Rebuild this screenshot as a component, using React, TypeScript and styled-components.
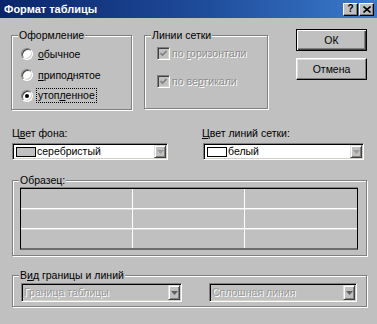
import React from 'react';
import styled, { createGlobalStyle } from 'styled-components';

const Global = createGlobalStyle`
  html, body { margin: 0; padding: 0; background: #c0c0c0; }
  body { font-family: "Liberation Sans", Arial, sans-serif; font-size: 10.5px; color: #000; }
  #root { width: 377px; height: 324px; }
`;

const Window = styled.div`
  width: 377px;
  height: 324px;
  background: #c0c0c0;
  display: flex;
  flex-direction: column;
  overflow: hidden;
`;

const TitleBar = styled.div`
  flex: 0 0 18px;
  height: 18px;
  box-sizing: border-box;
  background: linear-gradient(90deg, #0a246a 0%, #1f4d9c 55%, #3b7acb 100%);
  display: flex;
  align-items: center;
  padding: 0 3px 0 4px;
`;

const Title = styled.div`
  flex: 1;
  color: #fff;
  font-weight: bold;
  font-size: 11px;
  letter-spacing: 0;
`;

const TitleButtons = styled.div`
  display: flex;
  gap: 1px;
`;

const TitleButton = styled.div`
  width: 15px;
  height: 13px;
  box-sizing: border-box;
  background: #c0c0c0;
  border: 1px solid;
  border-color: #fff #000 #000 #fff;
  box-shadow: inset -1px -1px #808080;
  display: flex;
  align-items: center;
  justify-content: center;
  font-weight: bold;
  font-size: 10px;
  line-height: 1;
`;

const Body = styled.div`
  display: flex;
  flex-direction: column;
  padding: 11px 10px 0 11px;
`;

const TopRow = styled.div`
  display: flex;
  align-items: flex-start;
`;

const GroupBox = styled.div<{ $w: number; $h: number; $mt?: number; $ml?: number }>`
  position: relative;
  box-sizing: border-box;
  width: ${p => p.$w}px;
  height: ${p => p.$h}px;
  margin-top: ${p => p.$mt ?? 0}px;
  margin-left: ${p => p.$ml ?? 0}px;
  border: 1px solid #808080;
  box-shadow: 1px 1px 0 #fff, inset 1px 1px 0 #fff;
`;

const Legend = styled.span`
  position: absolute;
  top: -7px;
  left: 6px;
  padding: 0 1px;
  background: #c0c0c0;
  line-height: 13px;
  white-space: nowrap;
`;

const RadioList = styled.div`
  display: flex;
  flex-direction: column;
  padding: 7px 0 0 9px;
`;

const OptionRow = styled.div<{ $h: number }>`
  display: flex;
  align-items: center;
  height: ${p => p.$h}px;
  white-space: nowrap;
`;

const RadioCircle = styled.div<{ $checked?: boolean }>`
  width: 12px;
  height: 12px;
  box-sizing: border-box;
  border-radius: 50%;
  background: #fff;
  border: 1px solid;
  border-color: #808080 #fff #fff #808080;
  box-shadow: inset 1px 1px 0 #404040, inset -1px -1px 0 #d4d0c8;
  margin-right: 5px;
  display: flex;
  align-items: center;
  justify-content: center;
  &::after {
    content: '';
    display: ${p => (p.$checked ? 'block' : 'none')};
    width: 4px;
    height: 4px;
    border-radius: 50%;
    background: #000;
  }
`;

const FocusText = styled.span`
  outline: 1px dotted #000;
  outline-offset: 0;
  padding: 0 1px;
  margin-left: -1px;
  line-height: 13px;
`;

const CheckList = styled.div`
  display: flex;
  flex-direction: column;
  gap: 8px;
  padding: 7px 0 0 12px;
`;

const CheckBox = styled.div`
  width: 13px;
  height: 13px;
  box-sizing: border-box;
  background: #c0c0c0;
  border: 1px solid;
  border-color: #808080 #fff #fff #808080;
  box-shadow: inset 1px 1px 0 #404040, inset -1px -1px 0 #d4d0c8;
  margin-right: 2px;
  display: flex;
  align-items: center;
  justify-content: center;
`;

const DisabledText = styled.span`
  color: #8c8c8c;
  text-shadow: 1px 1px 0 #fff;
`;

const ButtonColumn = styled.div`
  display: flex;
  flex-direction: column;
  gap: 7px;
  margin-left: auto;
`;

const PushButton = styled.div<{ $default?: boolean }>`
  width: 71px;
  height: 22px;
  box-sizing: border-box;
  background: #c0c0c0;
  display: flex;
  align-items: center;
  justify-content: center;
  border: 1px solid;
  border-color: ${p => (p.$default ? '#000' : '#fff #000 #000 #fff')};
  box-shadow: ${p =>
    p.$default
      ? 'inset 1px 1px 0 #fff, inset -1px -1px 0 #404040, inset -2px -2px 0 #808080'
      : 'inset -1px -1px 0 #808080, inset 1px 1px 0 #dfdfdf'};
`;

const ColorRow = styled.div`
  display: grid;
  grid-template-columns: 156px 161px;
  column-gap: 35px;
  margin-top: 17px;
  padding-left: 1px;
`;

const Field = styled.div`
  display: flex;
  flex-direction: column;
  gap: 3px;
`;

const FieldLabel = styled.div<{ $shift?: number }>`
  line-height: 13px;
  margin-left: ${p => p.$shift ?? 0}px;
  white-space: nowrap;
`;

const Combo = styled.div<{ $h: number; $w?: number; $disabled?: boolean }>`
  display: flex;
  align-items: center;
  box-sizing: border-box;
  height: ${p => p.$h}px;
  width: ${p => (p.$w ? `${p.$w}px` : 'auto')};
  background: ${p => (p.$disabled ? '#c0c0c0' : '#fff')};
  border: 1px solid;
  border-color: #808080 #fff #fff #808080;
  box-shadow: inset 1px 1px 0 #000, inset -1px -1px 0 #d4d0c8;
  padding: 1px 1px 1px 2px;
`;

const Swatch = styled.div<{ $color: string }>`
  width: 20px;
  height: 10px;
  box-sizing: border-box;
  border: 1px solid #000;
  background: ${p => p.$color};
  margin: 0 1px 0 1px;
  flex: none;
`;

const ComboText = styled.span<{ $disabled?: boolean }>`
  flex: 1;
  white-space: nowrap;
  overflow: hidden;
  line-height: 13px;
  color: ${p => (p.$disabled ? '#999' : '#000')};
  text-shadow: ${p => (p.$disabled ? '1px 1px 0 #fff' : 'none')};
`;

const DropButton = styled.div`
  flex: none;
  align-self: stretch;
  width: 12px;
  box-sizing: border-box;
  background: #c0c0c0;
  border: 1px solid;
  border-color: #dfdfdf #404040 #404040 #dfdfdf;
  box-shadow: inset 1px 1px 0 #fff, inset -1px -1px 0 #808080;
  display: flex;
  align-items: center;
  justify-content: center;
`;

const SampleTable = styled.div`
  display: grid;
  grid-template-columns: repeat(3, 1fr);
  grid-template-rows: 20px 20px 19px;
  box-sizing: border-box;
  width: 338px;
  margin: 7px 0 0 7px;
  border: 1px solid #000;
  border-bottom: 2px solid #6c6c6c;
  box-shadow: 0 -1px 0 #808080;
`;

const SampleCell = styled.div<{ $lastCol: boolean; $lastRow: boolean }>`
  border-right: ${p => (p.$lastCol ? 'none' : '1px solid #fff')};
  border-bottom: ${p => (p.$lastRow ? 'none' : '1px solid #fff')};
  box-shadow: ${p => (p.$lastRow ? 'none' : '0 1px 0 #d8d8d8')};
`;

const BorderRow = styled.div`
  display: flex;
  gap: 27px;
  padding: 7px 0 0 8px;
`;

const Arrow = ({ color }: { color: string }) => (
  <svg width="7" height="4" viewBox="0 0 7 4">
    <polygon points="0,0 7,0 3.5,4" fill={color} />
  </svg>
);

const Check = () => (
  <svg width="7" height="7" viewBox="0 0 7 7">
    <path d="M0.5 3 L2.5 5 L6.5 1" stroke="#808080" strokeWidth="1.6" fill="none" />
  </svg>
);

export default function App() {
  const cells = Array.from({ length: 9 }, (_, i) => i);
  return (
    <Window>
      <Global />
      <TitleBar>
        <Title>Формат таблицы</Title>
        <TitleButtons>
          <TitleButton>?</TitleButton>
          <TitleButton>
            <svg width="8" height="7" viewBox="0 0 8 7">
              <path d="M0.5 0.5 L7.5 6.5 M7.5 0.5 L0.5 6.5" stroke="#000" strokeWidth="1.6" />
            </svg>
          </TitleButton>
        </TitleButtons>
      </TitleBar>
      <Body>
        <TopRow>
          <GroupBox $w={121} $h={75} $mt={6}>
            <Legend>Оформление</Legend>
            <RadioList>
              <OptionRow $h={21}>
                <RadioCircle />
                <span><u>о</u>бычное</span>
              </OptionRow>
              <OptionRow $h={21}>
                <RadioCircle />
                <span><u>п</u>риподнятое</span>
              </OptionRow>
              <OptionRow $h={21}>
                <RadioCircle $checked />
                <FocusText>утоп<u>л</u>енное</FocusText>
              </OptionRow>
            </RadioList>
          </GroupBox>
          <GroupBox $w={124} $h={74} $mt={6} $ml={12}>
            <Legend>Линии сетки</Legend>
            <CheckList>
              <OptionRow $h={20}>
                <CheckBox><Check /></CheckBox>
                <DisabledText>по <u>г</u>оризонтали</DisabledText>
              </OptionRow>
              <OptionRow $h={20}>
                <CheckBox><Check /></CheckBox>
                <DisabledText>по ве<u>р</u>тикали</DisabledText>
              </OptionRow>
            </CheckList>
          </GroupBox>
          <ButtonColumn>
            <PushButton $default>ОК</PushButton>
            <PushButton>Отмена</PushButton>
          </ButtonColumn>
        </TopRow>

        <ColorRow>
          <Field>
            <FieldLabel>Ц<u>в</u>ет фона:</FieldLabel>
            <Combo $h={17}>
              <Swatch $color="#c0c0c0" />
              <ComboText>серебристый</ComboText>
              <DropButton><Arrow color="#9a9a9a" /></DropButton>
            </Combo>
          </Field>
          <Field>
            <FieldLabel $shift={-1}><u>Ц</u>вет линий сетки:</FieldLabel>
            <Combo $h={17}>
              <Swatch $color="#fff" />
              <ComboText>белый</ComboText>
              <DropButton><Arrow color="#9a9a9a" /></DropButton>
            </Combo>
          </Field>
        </ColorRow>

        <GroupBox $w={355} $h={76} $mt={20} $ml={1}>
          <Legend>Образец:</Legend>
          <SampleTable>
            {cells.map(i => (
              <SampleCell key={i} $lastCol={i % 3 === 2} $lastRow={i >= 6} />
            ))}
          </SampleTable>
        </GroupBox>

        <GroupBox $w={355} $h={32} $mt={19} $ml={1}>
          <Legend>В<u>и</u>д границы и линий</Legend>
          <BorderRow>
            <Combo $h={19} $w={161} $disabled>
              <ComboText $disabled>Граница таблицы</ComboText>
              <DropButton><Arrow color="#606060" /></DropButton>
            </Combo>
            <Combo $h={19} $w={148} $disabled>
              <ComboText $disabled>Сплошная линия</ComboText>
              <DropButton><Arrow color="#606060" /></DropButton>
            </Combo>
          </BorderRow>
        </GroupBox>
      </Body>
    </Window>
  );
}
